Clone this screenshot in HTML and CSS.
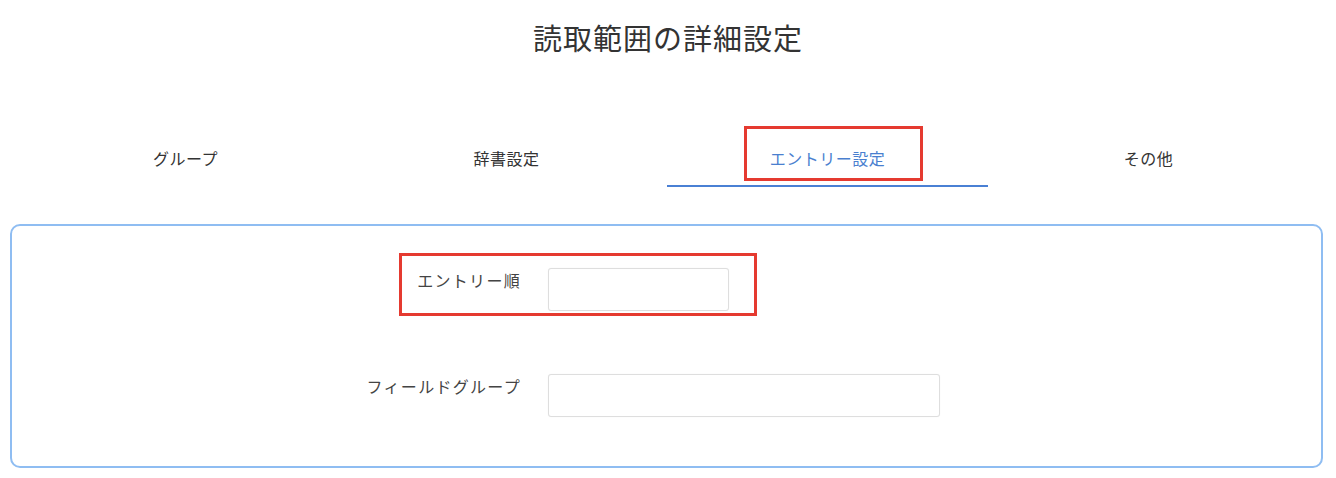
FILE: index.html
```html
<!DOCTYPE html>
<html lang="ja">
<head>
<meta charset="utf-8">
<title>読取範囲の詳細設定</title>
<link rel="stylesheet" href="styles.css">
</head>
<body>
<h1 class="title">読取範囲の詳細設定</h1>
<nav class="tabs">
  <div class="tab">グループ</div>
  <div class="tab">辞書設定</div>
  <div class="tab tab-active">エントリー設定<span class="mark mark-tab"></span></div>
  <div class="tab">その他</div>
</nav>
<section class="panel">
  <div class="row row-first">
    <label class="label">エントリー順</label>
    <input class="field field-short" type="text">
    <span class="mark mark-row"></span>
  </div>
  <div class="row">
    <label class="label">フィールドグループ</label>
    <input class="field field-long" type="text">
  </div>
</section>
</body>
</html>
```

FILE: styles.css
```css
html, body {
  margin: 0;
  padding: 0;
  background: #ffffff;
}
body {
  font-family: "Noto Sans CJK JP", "Noto Sans", sans-serif;
  color: #333333;
}
.title {
  margin: 0;
  padding-top: 17px;
  height: 43px;
  line-height: 40px;
  font-size: 29px;
  font-weight: 400;
  text-align: center;
  color: #333333;
  letter-spacing: 1px;
}
.tabs {
  display: grid;
  grid-template-columns: repeat(4, 1fr);
  margin: 86px 27px 0 25px;
}
.tab {
  position: relative;
  text-align: center;
  font-size: 16px;
  line-height: 24px;
  padding-bottom: 15px;
  border-bottom: 2px solid transparent;
  color: #333333;
  letter-spacing: 0.5px;
}
.tab-active {
  color: #4a7fcf;
  border-bottom-color: #4a80d4;
}
.mark {
  position: absolute;
  box-sizing: border-box;
  border: 3px solid #e53a30;
  pointer-events: none;
}
.mark-tab {
  left: 77px;
  top: -20px;
  width: 179px;
  height: 55px;
}
.panel {
  margin: 37px 13px 0 10px;
  border: 2px solid #8fbdf2;
  border-radius: 10px;
  padding: 42px 0 49px;
  height: 149px;
}
.row {
  position: relative;
  display: grid;
  grid-template-columns: 508px auto;
  column-gap: 28px;
  align-items: start;
}
.row-first {
  margin-bottom: 63px;
}
.label {
  text-align: right;
  font-size: 16px;
  line-height: 24px;
  color: #444444;
  letter-spacing: 1.3px;
  margin-right: -1px;
}
.field {
  box-sizing: border-box;
  height: 43px;
  border: 1px solid #dedede;
  border-radius: 3px;
  box-shadow: 0 0 1px rgba(0, 0, 0, 0.08);
  background: #ffffff;
  margin: 0;
  padding: 0 8px;
  font: inherit;
}
.field-short {
  width: 181px;
}
.field-long {
  width: 392px;
}
.mark-row {
  left: 387px;
  top: -15px;
  width: 358px;
  height: 63px;
}
```
